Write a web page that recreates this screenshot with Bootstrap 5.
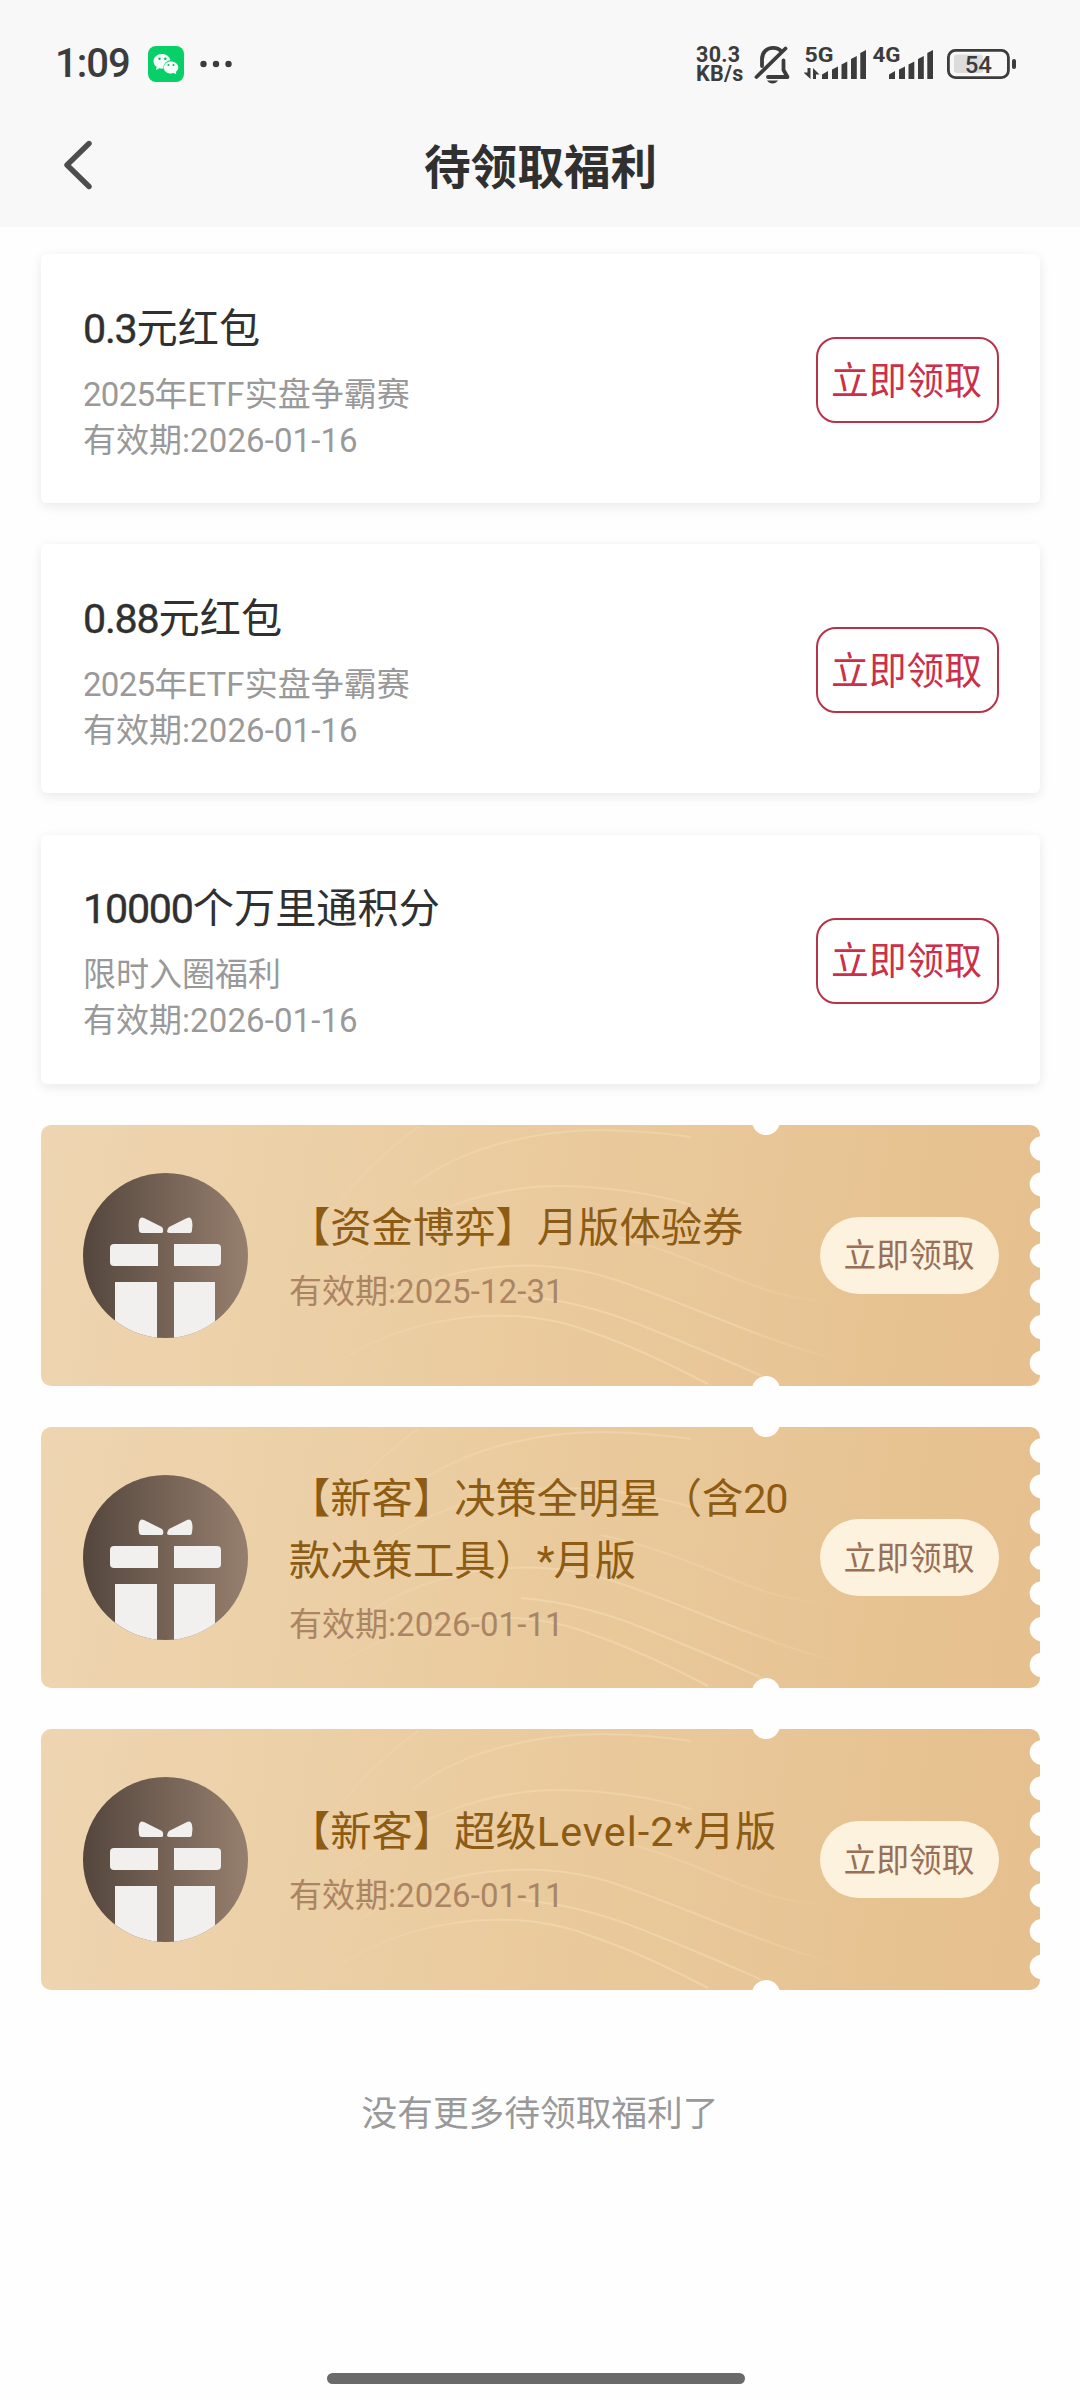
<!DOCTYPE html>
<html lang="zh-CN">
<head>
<meta charset="utf-8">
<meta name="viewport" content="width=device-width, initial-scale=1">
<title>待领取福利</title>
<link href="https://cdn.jsdelivr.net/npm/bootstrap@5.3.0/dist/css/bootstrap.min.css" rel="stylesheet">
<style>
body{font-family:"Noto Sans CJK SC",sans-serif;background:#fefefe;color:#303030;width:1080px;height:2400px;overflow:hidden;text-spacing-trim:space-all}
.top-area{background:#f8f8f8;height:227px}
.status-bar{height:128px;padding:0 64px 0 55px;color:#3c3c3c}
.clock{font:500 40px/1 Roboto,sans-serif;letter-spacing:-1px;width:73px;white-space:nowrap}
.app-icon{margin-left:20px}
.more-dots{margin-left:15px}
.speed{font:700 21.5px/19px Roboto,sans-serif;letter-spacing:.3px;width:58px;white-space:nowrap}
.sig-a{margin-left:14px}
.sig-b{margin-left:6px}
.batt{margin-left:12px}
.nav-title{font-size:46.6px;font-weight:700;line-height:72px;height:76px;padding-left:1px}
.back-icon{left:62px;top:12px}
.benefits{padding:27px 40.5px 0 41px;gap:41.3px}
.gift-card{height:249px;border:0;border-radius:6px;background:#fff;padding:0 41px 0 42px;box-shadow:0 3px 12px rgba(0,0,0,.09)}
.gift-name{font-size:41.2px;line-height:56px;margin-bottom:16px}
.gift-sub{font-size:33px;line-height:46px;color:#999}
.num{font-family:Roboto,"Noto Sans CJK SC",sans-serif;font-weight:400;line-height:1;letter-spacing:-1.2px}
.gift-name .num{-webkit-text-stroke:.4px #303030}
.gift-sub .num,.ticket-sub .num{letter-spacing:.1px}
.gift-sub .yr{letter-spacing:-.7px}
.ticket-name .num{letter-spacing:-1.2px}
.ticket-name .lv{letter-spacing:1.1px}
.btn-claim{width:183px;height:86px;margin-top:3px;padding:0 1px 5px 0;border:2px solid #b7334a;border-radius:20px;color:#cb2f49;font-size:37.8px;line-height:1;white-space:nowrap}
.ticket{height:261px;padding:0 41px 0 42px}
.ticket-bg{left:0;top:0;width:999px;height:261px}
.ticket-name{font-size:41.3px;line-height:62px;color:#8c5c14;margin-bottom:11px}
.ticket-sub{font-size:33px;line-height:46px;color:#ab8563}
.ticket-body{margin-left:41px;width:512px;padding-bottom:6px}
.btn-pill{width:179px;height:77px;padding:0 0 3px;border:0;background:#fdf2dd;color:#986f58;font-size:32.8px;line-height:1;white-space:nowrap}
.end-note{font-size:35.7px;line-height:52px;color:#999;margin-top:95px}
.home-bar{width:418px;height:11px;background:#6a6a6a;left:327px;bottom:16px}
</style>
<script src="https://cdn.jsdelivr.net/npm/bootstrap@5.3.0/dist/js/bootstrap.bundle.min.js"></script>
</head>
<body class="position-relative">
<svg width="0" height="0" class="position-absolute" aria-hidden="true">
<defs>
<linearGradient id="gold" x1="0" y1="0" x2="1" y2=".04"><stop offset="0" stop-color="#eed5b1"/><stop offset=".5" stop-color="#eacb9e"/><stop offset="1" stop-color="#e6c08e"/></linearGradient>
<linearGradient id="wave" gradientUnits="userSpaceOnUse" x1="250" y1="0" x2="800" y2="0"><stop offset="0" stop-color="#f6dfb9" stop-opacity="0"/><stop offset=".4" stop-color="#f6dfb9" stop-opacity=".5"/><stop offset=".8" stop-color="#f6dfb9" stop-opacity=".5"/><stop offset="1" stop-color="#f6dfb9" stop-opacity="0"/></linearGradient>
<linearGradient id="brown"><stop offset="0" stop-color="#54463d"/><stop offset="1" stop-color="#967f6e"/></linearGradient>
<clipPath id="round"><circle cx="82.5" cy="82.5" r="82.5"/></clipPath>
<symbol id="ticket" viewBox="0 0 999 261">
<rect width="999" height="261" rx="10" fill="url(#gold)"/>
<g fill="none" stroke="url(#wave)" stroke-width="2">
<path d="M270 120Q305 55 377 2"/>
<path d="M372 60C424 20 500 5 561 5Q610 6 650 12" stroke-opacity=".8"/>
<path d="M300 150C370 85 450 61 519 61Q590 62 650 80" stroke-opacity=".8"/>
<path d="M560 108C610 118 655 138 698 155Q740 172 775 175" stroke-opacity=".6"/>
<path d="M320 190C400 135 500 130 575 155C650 180 720 215 798 235" stroke-opacity=".9"/>
<path d="M480 171Q540 176 602 201Q660 224 721 251"/>
<path d="M300 235C380 185 480 180 550 207Q600 224 667 259"/>
</g>
<g fill="#fefefe"><circle cx="725" cy="-4" r="14"/><circle cx="725" cy="265" r="14"/>
<circle cx="1001" cy="23.5" r="12.3"/><circle cx="1001" cy="59.3" r="12.3"/><circle cx="1001" cy="95" r="12.3"/><circle cx="1001" cy="130.6" r="12.3"/><circle cx="1001" cy="166.3" r="12.3"/><circle cx="1001" cy="202.1" r="12.3"/><circle cx="1001" cy="238" r="12.3"/></g>
</symbol>
<symbol id="gift" viewBox="0 0 165 165">
<circle cx="82.5" cy="82.5" r="82.5" fill="url(#brown)"/>
<g fill="#f1f0ef" clip-path="url(#round)">
<path d="M56 48Q57 43 61 45L79 54Q81 56 80 59Q80 60 78 60H59Q56 60 56 57Q55 52 56 48Z"/>
<path d="M109 48Q108 43 104 45L86 54Q84 56 84 59Q85 60 87 60H107Q109 60 109 57Q110 52 109 48Z"/>
<path d="M31 71H75V93H31Q27 93 27 89V75Q27 71 31 71Z"/>
<path d="M91 71H134Q138 71 138 75V89Q138 93 134 93H91Z"/>
<path d="M32 109H74V165H32ZM91 109H132V165H91Z"/>
</g>
</symbol>
</defs>
</svg>

<header class="top-area">
<div class="status-bar d-flex align-items-center">
<div class="clock">1:09</div>
<svg class="app-icon" width="36" height="36" viewBox="0 0 36 36"><rect width="36" height="36" rx="8" fill="#07d068"/><path d="M14 8C9 8 5.500 11.300 5.500 15.300C5.500 17.700 6.700 19.700 8.700 21L8 24L11.300 22.300C12.300 22.600 14 22.700 15.300 22.600C15 18 18.700 14.500 22.500 14.300C21.700 10.500 18.200 8 14 8Z" fill="#f4fff9"/><path d="M23 15.500C18.700 15.500 15.700 18.200 15.700 21.500C15.700 24.900 18.700 27.500 23 27.500C24 27.500 25 27.300 25.800 27L28.300 28.200L27.800 25.800C29.500 24.700 30.300 23.200 30.300 21.500C30.300 18.200 27.200 15.500 23 15.500Z" fill="#f4fff9"/><g fill="#07b85c"><circle cx="11.500" cy="12.700" r="1.200"/><circle cx="17.300" cy="12.700" r="1.200"/><circle cx="20.500" cy="19" r="1"/><circle cx="25.500" cy="19" r="1"/></g></svg>
<svg class="more-dots" width="34" height="10" viewBox="0 0 34 10" fill="#3c3c3c"><circle cx="4.500" cy="5" r="3.200"/><circle cx="17" cy="5" r="3.200"/><circle cx="29.500" cy="5" r="3.200"/></svg>
<div class="speed ms-auto">30.3<br>KB/s</div>
<svg width="36" height="50" viewBox="754 39 36 50" fill="none" stroke="#3c3c3c" stroke-width="3.800" stroke-linecap="round" stroke-linejoin="round"><path d="M762 66V59.500C762 52 767 47.800 773 47.800C776.500 47.800 779.500 49 781.500 51.500M785.500 48.500L756.500 77M768 77H787.500L783.500 70V60.500"/><path d="M767 80.500H778Q776 83.500 772.500 83.500Q769 83.500 767 80.500Z" fill="#3c3c3c" stroke="none"/></svg>
<svg class="sig-a" width="62" height="50" viewBox="804 39 62 50" fill="#3c3c3c"><text x="804.500" y="62" font-family="Roboto,sans-serif" font-weight="700" font-size="21" textLength="29" lengthAdjust="spacingAndGlyphs">5G</text><path d="M807.500 68H810.500V79L803.500 72.500H807.500ZM813 79V68L819.500 74.500H816V79Z"/><path d="M822 74.500L828 71V79H822ZM832 69.500L838 66.500V79H832ZM841.500 64.500L847.300 61.500V79H841.500ZM851 59L856.800 56V79H851ZM860.300 53L866 50V79H860.300Z"/></svg>
<svg class="sig-b" width="62" height="50" viewBox="872 39 62 50" fill="#3c3c3c"><text x="872.500" y="62" font-family="Roboto,sans-serif" font-weight="700" font-size="21" textLength="28" lengthAdjust="spacingAndGlyphs">4G</text><path transform="translate(67)" d="M822 74.500L828 71V79H822ZM832 69.500L838 66.500V79H832ZM841.500 64.500L847.300 61.500V79H841.500ZM851 59L856.800 56V79H851ZM860.300 53L866 50V79H860.300Z"/></svg>
<svg class="batt" width="70" height="50" viewBox="946 39 70 50"><rect x="948.400" y="50.400" width="60" height="27.200" rx="7" fill="none" stroke="#3c3c3c" stroke-width="2.800"/><rect x="954" y="54.500" width="29" height="18.500" rx="3" fill="#dcdcdc"/><rect x="1012" y="59" width="4" height="10" rx="2" fill="#3c3c3c"/><text x="978.300" y="73" text-anchor="middle" font-family="Roboto,sans-serif" font-weight="500" font-size="24" fill="#3c3c3c">54</text></svg>
</div>
<div class="position-relative text-center nav-title">
<svg class="position-absolute back-icon" width="32" height="50" viewBox="62 140 32 50" fill="none" stroke="#4d4d4d" stroke-width="5.400" stroke-linecap="round" stroke-linejoin="round"><path d="M89 143.500L67 165L89 186.500"/></svg>
待领取福利
</div>
</header>

<main class="benefits d-flex flex-column">
<section class="card gift-card flex-row align-items-center justify-content-between">
<div><div class="gift-name"><span class="num">0.3</span>元红包</div><div class="gift-sub"><span class="num yr">2025</span>年<span class="num">ETF</span>实盘争霸赛</div><div class="gift-sub">有效期<span class="num">:2026-01-16</span></div></div>
<button class="btn btn-claim">立即领取</button>
</section>
<section class="card gift-card flex-row align-items-center justify-content-between">
<div><div class="gift-name"><span class="num">0.88</span>元红包</div><div class="gift-sub"><span class="num yr">2025</span>年<span class="num">ETF</span>实盘争霸赛</div><div class="gift-sub">有效期<span class="num">:2026-01-16</span></div></div>
<button class="btn btn-claim">立即领取</button>
</section>
<section class="card gift-card flex-row align-items-center justify-content-between">
<div><div class="gift-name"><span class="num">10000</span>个万里通积分</div><div class="gift-sub">限时入圈福利</div><div class="gift-sub">有效期<span class="num">:2026-01-16</span></div></div>
<button class="btn btn-claim">立即领取</button>
</section>

<section class="ticket position-relative d-flex align-items-center">
<svg class="ticket-bg position-absolute"><use href="#ticket"/></svg>
<svg class="position-relative flex-shrink-0" width="165" height="165"><use href="#gift"/></svg>
<div class="ticket-body position-relative"><div class="ticket-name">【资金博弈】月版体验券</div><div class="ticket-sub">有效期<span class="num">:2025-12-31</span></div></div>
<button class="btn btn-pill rounded-pill position-relative ms-auto">立即领取</button>
</section>
<section class="ticket position-relative d-flex align-items-center">
<svg class="ticket-bg position-absolute"><use href="#ticket"/></svg>
<svg class="position-relative flex-shrink-0" width="165" height="165"><use href="#gift"/></svg>
<div class="ticket-body position-relative"><div class="ticket-name">【新客】决策全明星（含<span class="num">20</span>款决策工具）<span class="num">*</span>月版</div><div class="ticket-sub">有效期<span class="num">:2026-01-11</span></div></div>
<button class="btn btn-pill rounded-pill position-relative ms-auto">立即领取</button>
</section>
<section class="ticket position-relative d-flex align-items-center">
<svg class="ticket-bg position-absolute"><use href="#ticket"/></svg>
<svg class="position-relative flex-shrink-0" width="165" height="165"><use href="#gift"/></svg>
<div class="ticket-body position-relative"><div class="ticket-name">【新客】超级<span class="num lv">Level-2*</span>月版</div><div class="ticket-sub">有效期<span class="num">:2026-01-11</span></div></div>
<button class="btn btn-pill rounded-pill position-relative ms-auto">立即领取</button>
</section>
</main>
<div class="end-note text-center">没有更多待领取福利了</div>
<div class="home-bar rounded-pill position-absolute"></div>
</body>
</html>
